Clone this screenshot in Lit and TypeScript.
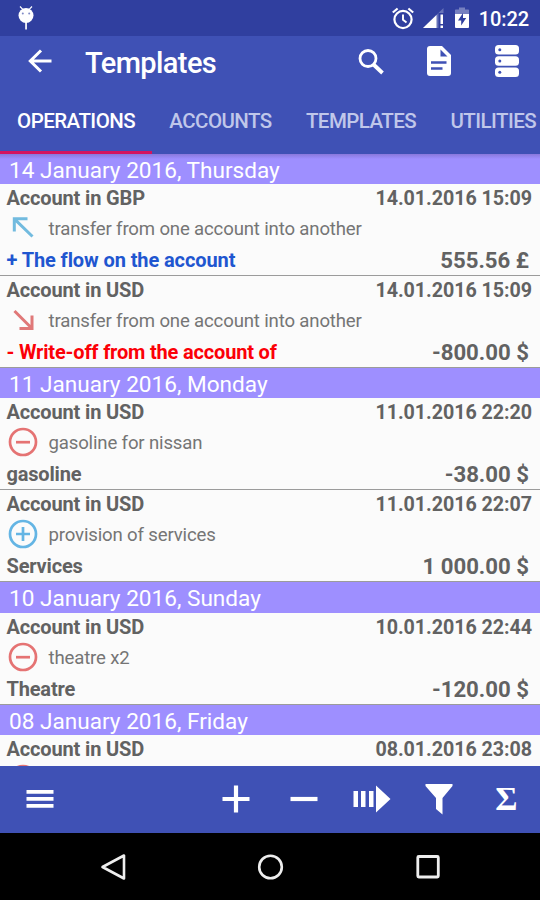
import { LitElement, html, css, svg, nothing } from "lit";
import { customElement, property } from "lit/decorators.js";

type Kind = "in" | "out" | "minus" | "plus";

interface Operation {
  account: string;
  time: string;
  kind: Kind;
  note: string;
  category: string;
  amount: string;
  tone?: "credit" | "debit";
}

interface Day {
  title: string;
  operations: Operation[];
}

const DAYS: Day[] = [
  {
    title: "14 January 2016, Thursday",
    operations: [
      { account: "Account in GBP", time: "14.01.2016 15:09", kind: "in", note: "transfer from one account into another", category: "+ The flow on the account", amount: "555.56 £", tone: "credit" },
      { account: "Account in USD", time: "14.01.2016 15:09", kind: "out", note: "transfer from one account into another", category: "- Write-off from the account of", amount: "-800.00 $", tone: "debit" },
    ],
  },
  {
    title: "11 January 2016, Monday",
    operations: [
      { account: "Account in USD", time: "11.01.2016 22:20", kind: "minus", note: "gasoline for nissan", category: "gasoline", amount: "-38.00 $" },
      { account: "Account in USD", time: "11.01.2016 22:07", kind: "plus", note: "provision of services", category: "Services", amount: "1 000.00 $" },
    ],
  },
  {
    title: "10 January 2016, Sunday",
    operations: [
      { account: "Account in USD", time: "10.01.2016 22:44", kind: "minus", note: "theatre x2", category: "Theatre", amount: "-120.00 $" },
    ],
  },
  {
    title: "08 January 2016, Friday",
    operations: [
      { account: "Account in USD", time: "08.01.2016 23:08", kind: "minus", note: "", category: "", amount: "" },
    ],
  },
];

const kindIcon = (kind: Kind) => {
  const shapes = {
    in: svg`<path d="M7.300 19.500V6.800H20.500M7.300 6.800L25.500 24.500" stroke="#72bbdf" stroke-width="3"/>`,
    out: svg`<path d="M25 11.500V24.500H12.500M7.500 7L25 24.500" stroke="#e07878" stroke-width="3"/>`,
    minus: svg`<g stroke="#e57373" stroke-width="2.700"><circle cx="16" cy="16" r="13"/><path d="M9 16.200H23"/></g>`,
    plus: svg`<g stroke="#64b5e4" stroke-width="2.700"><circle cx="16" cy="16" r="13"/><path d="M9 16H23M16 9V23"/></g>`,
  };
  return html`<svg width="32" height="32" viewBox="0 0 32 32" fill="none">${shapes[kind]}</svg>`;
};

@customElement("status-bar")
export class StatusBar extends LitElement {
  static styles = css`
    :host { display: flex; align-items: center; height: 36px; background: #303f9f; padding: 0 11px 0 17px; color: #fff; }
    svg { display: block; }
    .spacer { flex: 1; }
    .alarm { margin-right: 9px; }
    .signal { margin-right: 9.500px; }
    .battery { margin-right: 10px; }
    .clock { font-size: 20px; font-weight: 500; line-height: 36px; padding-top: 2px; letter-spacing: -0.1px; }
  `;
  render() {
    return html`
      <svg width="18" height="24" viewBox="0 0 18 24" fill="#fff">
        <path d="M3 .5L6 3.600M15 .5L12 3.600" stroke="#fff" stroke-width="1.200"/>
        <ellipse cx="9" cy="9.500" rx="7.500" ry="7.600"/>
        <rect x="8.200" y="16" width="1.700" height="7.500"/>
        <circle cx="5.800" cy="7.600" r="1" fill="#7f89c5"/><circle cx="12.200" cy="7.600" r="1" fill="#7f89c5"/>
      </svg>
      <span class="spacer"></span>
      <svg class="alarm" width="22" height="23" viewBox="0 0 22 23" fill="none" stroke="#fff">
        <circle cx="11" cy="12.500" r="8.600" stroke-width="2.200"/>
        <path d="M11 7.500V12.700L14.500 15.500" stroke-width="1.900"/>
        <path d="M.8 5.500L5.600 1.500M21.200 5.500L16.400 1.500" stroke-width="2.200"/>
      </svg>
      <svg class="signal" width="22" height="22" viewBox="0 0 22 22">
        <path d="M0 21L20.500 1V6H15.500V21Z" fill="#6773b9"/>
        <path d="M0 21L13.500 8V21Z" fill="#fff"/>
        <path d="M17.500 7.500H20V17H17.500ZM17.500 18.500H20V21H17.500Z" fill="#fff"/>
      </svg>
      <svg class="battery" width="14" height="22" viewBox="0 0 14 22">
        <path d="M0 3Q0 2.500.8 2.500H4V.5H10V2.500H13.200Q14 2.500 14 3V8H0Z" fill="#7680c0"/>
        <path d="M0 7H14V20Q14 21 13 21H1Q0 21 0 20Z" fill="#fff"/>
        <path d="M8 6L3 13.500H6.200V18.500L11.200 11H8Z" fill="#303f9f"/>
      </svg>
      <span class="clock">10:22</span>
    `;
  }
}

@customElement("app-toolbar")
export class AppToolbar extends LitElement {
  static styles = css`
    :host { display: flex; align-items: center; height: 50px; background: #3f51b5; color: #fff; padding: 0 20.500px 0 28px; }
    svg { display: block; }
    .title { flex: 1; margin-left: 33px; font-size: 29px; letter-spacing: -0.600px; font-weight: 500; line-height: 50px; padding-top: 4px; }
    .search { margin-right: 40.500px; margin-top: 1px; }
    .doc { margin-right: 42px; }
  `;
  render() {
    return html`
      <svg width="24" height="24" viewBox="0 0 24 24" fill="none" stroke="#fff" stroke-width="3">
        <path d="M23.500 12H3M13 1.500L2.300 12L13 22.500"/>
      </svg>
      <span class="title">Templates</span>
      <svg class="search" width="28" height="28" viewBox="0 0 28 28" fill="none" stroke="#fff">
        <circle cx="11" cy="10.500" r="8" stroke-width="2.800"/>
        <path d="M16.500 16.500L25.500 25" stroke-width="3.800"/>
      </svg>
      <svg class="doc" width="26" height="30" viewBox="0 0 26 30">
        <path d="M4 0H16L25 9V27Q25 30 22 30H4Q1 30 1 27V3Q1 0 4 0Z" fill="#fff"/>
        <path d="M14.500 3.500V10.500H21.500ZM5 15.300H20.500V17.800H5ZM5 21.200H16.500V23.700H5Z" fill="#3f51b5"/>
      </svg>
      <svg width="26" height="34" viewBox="0 0 26 34">
        <g fill="#fff"><rect x="1" y="1" width="24" height="9.600" rx="3.500"/><rect x="1" y="12.200" width="24" height="9.600" rx="3.500"/><rect x="1" y="23.400" width="24" height="9.600" rx="3.500"/></g>
        <g fill="#3f51b5"><circle cx="5.800" cy="5.800" r="1.500"/><circle cx="5.800" cy="17" r="1.500"/><circle cx="5.800" cy="28.200" r="1.500"/></g>
      </svg>
    `;
  }
}

@customElement("tab-strip")
export class TabStrip extends LitElement {
  static styles = css`
    :host { display: flex; height: 67.500px; background: #3f51b5; overflow: hidden; color: #c0c7ea; font-size: 20.500px; letter-spacing: -0.540px; font-weight: 500; line-height: 70px; }
    .tab { flex: none; box-sizing: border-box; padding: 0 17.100px; white-space: nowrap; border-bottom: 3px solid transparent; height: 67.500px; }
    .active { color: #fff; border-bottom-color: #d4145f; }
  `;
  render() {
    return ["OPERATIONS", "ACCOUNTS", "TEMPLATES", "UTILITIES"].map(
      (name, i) => html`<span class="tab ${i === 0 ? "active" : ""}">${name}</span>`,
    );
  }
}

@customElement("operation-row")
export class OperationRow extends LitElement {
  @property({ attribute: false }) op!: Operation;
  static styles = css`
    :host { display: block; box-sizing: border-box; height: 92.100px; padding: 0 8px 0 6.500px; border-bottom: 1.500px solid #9b9b9b; color: #626262; }
    svg { display: block; margin-top: -1.500px; }
    .line { display: flex; justify-content: space-between; white-space: nowrap; }
    .head { font-size: 20px; letter-spacing: -0.150px; font-weight: 700; line-height: 29.700px; height: 29px; }
    .time { font-weight: 700; font-size: 19.700px; letter-spacing: -0.050px; line-height: 30.500px; }
    .mid { align-items: center; justify-content: flex-start; height: 32px; gap: 10px; }
    .note { color: #757575; font-size: 18.600px; letter-spacing: -0.160px; }
    .foot { font-size: 20px; letter-spacing: -0.180px; font-weight: 700; line-height: 31.400px; }
    .amount { font-size: 22.200px; letter-spacing: 0; font-weight: 700; margin-right: 3px; }
    .credit { color: #1f56d0; letter-spacing: -0.100px; }
    .debit { color: #fb0007; }
  `;
  render() {
    const o = this.op;
    return html`
      <div class="line head"><span>${o.account}</span><span class="time">${o.time}</span></div>
      <div class="line mid">${kindIcon(o.kind)}<span class="note">${o.note}</span></div>
      ${o.category
        ? html`<div class="line foot"><span class="${o.tone ?? ""}">${o.category}</span><span class="amount">${o.amount}</span></div>`
        : nothing}
    `;
  }
}

@customElement("operation-list")
export class OperationList extends LitElement {
  static styles = css`
    :host { display: block; background: #fbfbfb; overflow: hidden; }
    .day { box-sizing: border-box; height: 30.400px; padding-left: 9px; background: #9e8fff; color: #fff; font-size: 22.600px; line-height: 33.500px; white-space: nowrap; }
    .day:first-child { height: 30px; line-height: 33px; background: linear-gradient(#8878dc, #9e8fff 5px); }
  `;
  render() {
    return DAYS.map(
      (day) => html`
        <div class="day">${day.title}</div>
        ${day.operations.map((op) => html`<operation-row .op=${op}></operation-row>`)}
      `,
    );
  }
}

@customElement("action-bar")
export class ActionBar extends LitElement {
  static styles = css`
    :host { display: flex; align-items: center; box-sizing: border-box; height: 67.300px; background: #3f51b5; padding: 0 14px 0 20px; }
    svg { display: block; }
    .gap { flex: 1; }
    .group { display: grid; grid-template-columns: repeat(5, 67.500px); justify-items: center; align-items: center; margin-right: -14px; }
    .sigma { color: #fff; font-family: "Liberation Serif", serif; font-weight: 700; font-size: 34px; line-height: 40px; }
  `;
  render() {
    return html`
      <svg width="40" height="40" viewBox="0 0 40 40"><path d="M6.500 11H33.500V14.800H6.500ZM6.500 18H33.500V21.800H6.500ZM6.500 25H33.500V28.800H6.500Z" fill="#fff"/></svg>
      <span class="gap"></span>
      <div class="group">
        <svg width="40" height="40" viewBox="0 0 40 40"><path d="M6.500 20H33.500M20 6.500V33.500" stroke="#fff" stroke-width="4.200"/></svg>
        <svg width="40" height="40" viewBox="0 0 40 40"><path d="M6.500 20H33.500" stroke="#fff" stroke-width="4.200"/></svg>
        <svg width="40" height="40" viewBox="0 0 40 40"><path d="M2.500 12H7V28H2.500ZM10 12H14.500V28H10ZM18 12H22.500V28H18ZM25 6.500L39.500 20L25 33.500Z" fill="#fff"/></svg>
        <svg width="40" height="40" viewBox="0 0 40 40"><path d="M6.500 5H33.500V7L23.500 19V35.500L17 30V19L6.500 7Z" fill="#fff"/></svg>
        <span class="sigma">Σ</span>
      </div>
    `;
  }
}

@customElement("nav-bar")
export class NavBar extends LitElement {
  static styles = css`
    :host { display: grid; grid-template-columns: repeat(3, 157.500px); justify-content: center; justify-items: center; align-items: center; height: 67px; background: #000; }
    svg { display: block; }
  `;
  render() {
    return html`
      <svg width="30" height="30" viewBox="0 0 30 30" fill="none" stroke="#eee" stroke-width="2.600"><path d="M4.500 15L26 3.500V26.500Z" stroke-linejoin="round"/></svg>
      <svg width="30" height="30" viewBox="0 0 30 30" fill="none" stroke="#eee" stroke-width="2.600"><circle cx="15.500" cy="15" r="11.300"/></svg>
      <svg width="30" height="30" viewBox="0 0 30 30" fill="none" stroke="#eee" stroke-width="2.800"><rect x="4.800" y="4.500" width="20.500" height="20.500" rx="1"/></svg>
    `;
  }
}

@customElement("app-root")
export class AppRoot extends LitElement {
  static styles = css`
    :host { display: flex; flex-direction: column; width: 540px; height: 900px; overflow: hidden; font-family: Roboto, "Liberation Sans", sans-serif; background: #000; }
    operation-list { flex: 1; min-height: 0; }
    status-bar, app-toolbar, tab-strip, action-bar, nav-bar { flex: none; }
  `;
  render() {
    return html`
      <status-bar></status-bar>
      <app-toolbar></app-toolbar>
      <tab-strip></tab-strip>
      <operation-list></operation-list>
      <action-bar></action-bar>
      <nav-bar></nav-bar>
    `;
  }
}
